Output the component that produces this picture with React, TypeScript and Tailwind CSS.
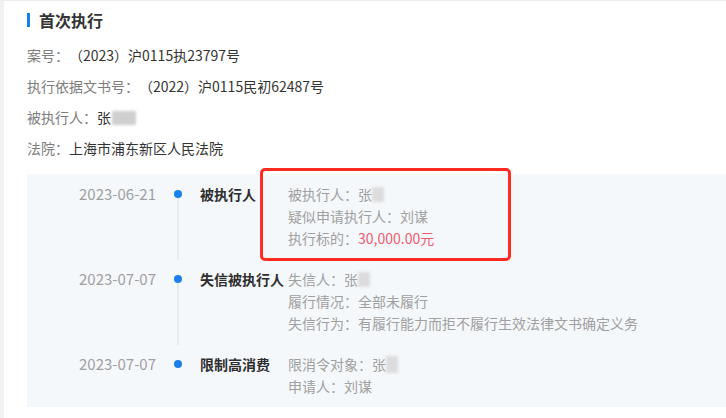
import React from "react";

const font = { fontFamily: '"Noto Sans CJK SC", "Noto Sans", sans-serif' };

function Blur({ className = "" }: { className?: string }) {
  return <span className={`inline-block align-middle bg-[#cfcfcf] blur-[1.5px] ${className}`} />;
}

function InfoRow({ label, children }: { label: string; children: React.ReactNode }) {
  return (
    <div className="h-[31px] flex items-center text-[14px] whitespace-nowrap">
      <span className="text-[#7d7d7d]">{label}</span>
      <span className="text-[#333]">{children}</span>
    </div>
  );
}

type Item = { date: string; type: string; lines: React.ReactNode[]; last?: boolean };

function TimelineItem({ date, type, lines, last }: Item) {
  return (
    <div className={`flex ${last ? "" : "pb-[19px]"}`}>
      <div className="w-[129px] text-right text-[15px] leading-[22px] text-[#a0a0a0]">{date}</div>
      <div className="w-[44px] relative flex justify-center">
        <div className="mt-[7px] w-[8px] h-[8px] rounded-full bg-[#1c80ea] relative z-10" />
        {!last && (
          <div className="absolute left-1/2 top-[11px] -bottom-[11px] w-px bg-[#d8dde4] -translate-x-1/2" />
        )}
      </div>
      <div className="w-[88px] text-[14px] leading-[22px] font-bold text-[#2e2e2e] whitespace-nowrap">{type}</div>
      <div className="flex flex-col text-[14px] leading-[22px] text-[#a0a0a0] whitespace-nowrap">
        {lines.map((l, i) => (
          <div key={i} className="h-[22px] flex items-center">{l}</div>
        ))}
      </div>
    </div>
  );
}

export default function App() {
  return (
    <div
      style={font}
      className="relative w-[726px] h-[418px] bg-white border-t border-[#ececec] border-l-[4px] border-l-[#f2f2f2] pl-[23px] pt-[4px] overflow-hidden"
    >
      <div className="h-[30px] flex items-center">
        <div className="w-[3px] h-[14px] bg-[#1a7fe6] mr-[9px]" />
        <span className="text-[16px] font-bold text-[#333]">首次执行</span>
      </div>
      <div className="mt-[5px]">
        <InfoRow label="案号：">（2023）沪0115执23797号</InfoRow>
        <InfoRow label="执行依据文书号：">（2022）沪0115民初62487号</InfoRow>
        <InfoRow label="被执行人：">
          <span className="inline-flex items-center">
            张<Blur className="w-[24px] h-[14px] ml-[1px]" />
          </span>
        </InfoRow>
        <InfoRow label="法院：">上海市浦东新区人民法院</InfoRow>
      </div>

      <div className="mt-[10px] bg-[#f5f8fb] pt-[9px] pb-[9px] h-[233px]">
        <TimelineItem
          date="2023-06-21"
          type="被执行人"
          lines={[
            <span className="inline-flex items-center">被执行人：张<Blur className="w-[12px] h-[15px] bg-[#dcdcdc]" /></span>,
            "疑似申请执行人：刘谋",
            <span>执行标的：<span className="text-[#ef5b70]">30,000.00元</span></span>,
          ]}
        />
        <TimelineItem
          date="2023-07-07"
          type="失信被执行人"
          lines={[
            <span className="inline-flex items-center">失信人：张<Blur className="w-[12px] h-[15px] bg-[#dcdcdc]" /></span>,
            "履行情况：全部未履行",
            "失信行为：有履行能力而拒不履行生效法律文书确定义务",
          ]}
        />
        <TimelineItem
          date="2023-07-07"
          type="限制高消费"
          last
          lines={[
            <span className="inline-flex items-center">限消令对象：张<Blur className="w-[12px] h-[17px] bg-[#dcdcdc]" /></span>,
            "申请人：刘谋",
          ]}
        />
      </div>

      <div className="absolute left-[256px] top-[167px] w-[251px] h-[93px] border-[3px] border-[#ff2a20] rounded-[5px] pointer-events-none" />
    </div>
  );
}
